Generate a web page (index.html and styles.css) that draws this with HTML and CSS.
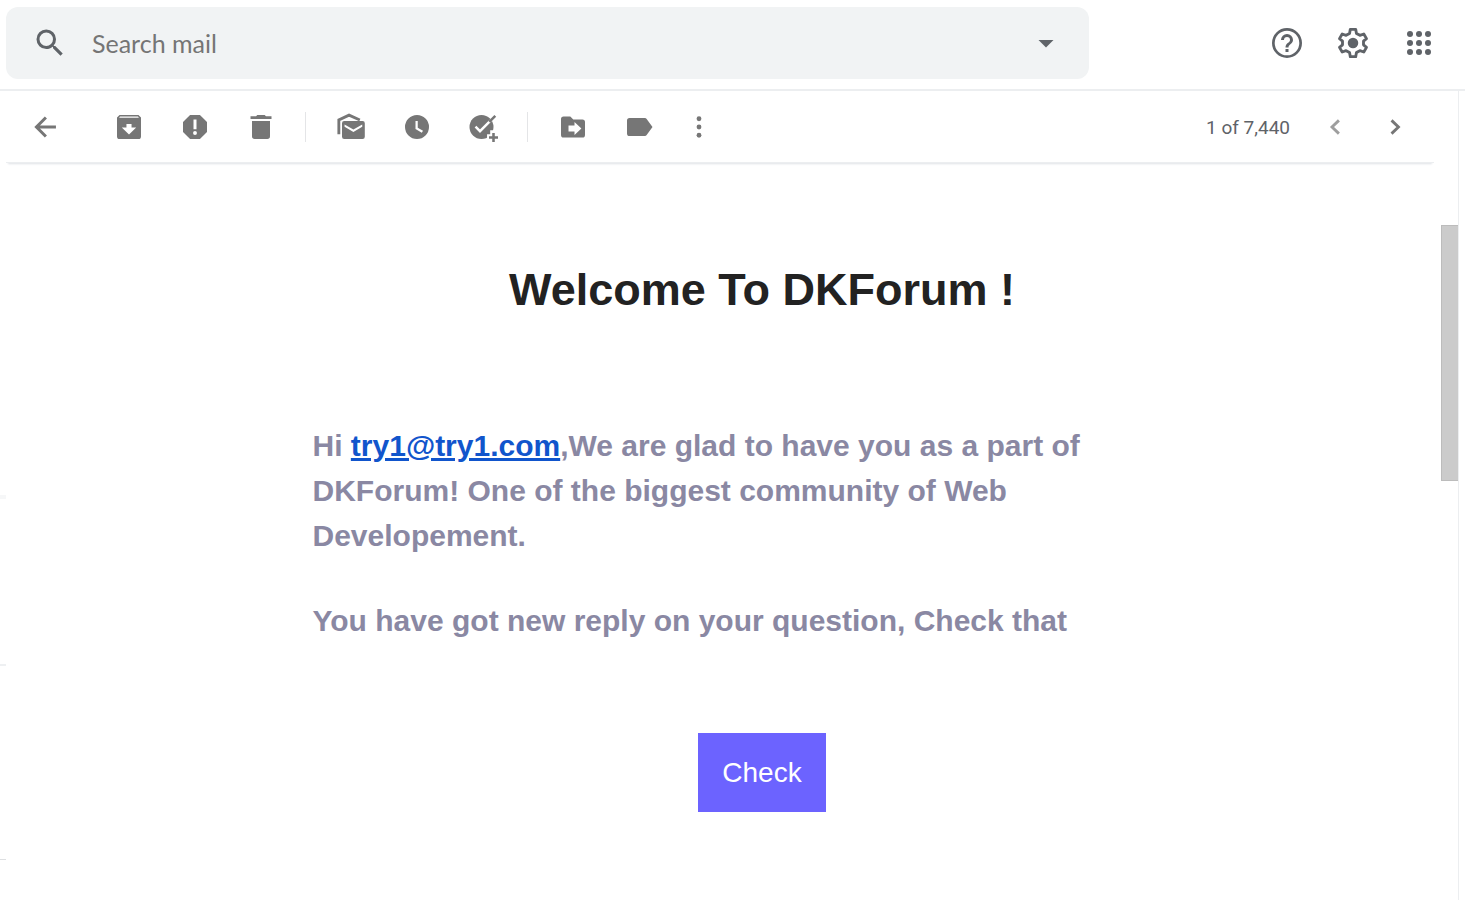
FILE: index.html
```html
<!DOCTYPE html>
<html lang="en">
<head>
<meta charset="utf-8">
<title>Mail</title>
<link rel="stylesheet" href="styles.css">
</head>
<body>
<header class="topbar">
  <form class="search" role="search">
    <button class="icon-btn large" type="button" aria-label="Search">
      <svg viewBox="0 0 24 24"><path d="M15.500 14h-.79l-.28-.27A6.470 6.470 0 0 0 16 9.500 6.500 6.500 0 1 0 9.500 16c1.610 0 3.090-.59 4.230-1.570l.27.28v.79l5 4.990L20.490 19zm-6 0a4.500 4.500 0 1 1 0-9 4.500 4.500 0 0 1 0 9z"/></svg>
    </button>
    <input class="search-input" type="text" placeholder="Search mail" aria-label="Search mail">
    <button class="icon-btn large" type="button" aria-label="Search options">
      <svg viewBox="0 0 24 24"><path d="M7 10l5 5 5-5z"/></svg>
    </button>
  </form>
  <nav class="top-actions" aria-label="Account tools">
    <button class="icon-btn large" type="button" aria-label="Help">
      <svg viewBox="0 0 24 24"><path d="M11 18h2v-2h-2zm1-16a10 10 0 1 0 0 20 10 10 0 0 0 0-20zm0 18.200a8.200 8.200 0 1 1 0-16.400 8.200 8.200 0 0 1 0 16.400zM12 6a4 4 0 0 0-4 4h2a2 2 0 1 1 4 0c0 2-3 1.750-3 5h2c0-2.250 3-2.500 3-5a4 4 0 0 0-4-4z"/></svg>
    </button>
    <button class="icon-btn large" type="button" aria-label="Settings">
      <svg viewBox="0 0 24 24"><path d="M10.200 2.900h3.600l.5 2.700 2.300 1.300 2.600-.9 1.800 3.100-2 1.700v2.400l2 1.700-1.800 3.100-2.600-.9-2.300 1.300-.5 2.700h-3.600l-.5-2.700-2.300-1.300-2.600.9L3 14.900l2-1.700v-2.400L3 9.100 4.800 6l2.600.9 2.300-1.300z" fill="none" stroke="currentColor" stroke-width="1.900" stroke-linejoin="round"/><circle cx="12" cy="12" r="3.500"/></svg>
    </button>
    <button class="icon-btn large" type="button" aria-label="Apps">
      <svg viewBox="0 0 24 24"><circle cx="6" cy="6" r="2"/><circle cx="12" cy="6" r="2"/><circle cx="18" cy="6" r="2"/><circle cx="6" cy="12" r="2"/><circle cx="12" cy="12" r="2"/><circle cx="18" cy="12" r="2"/><circle cx="6" cy="18" r="2"/><circle cx="12" cy="18" r="2"/><circle cx="18" cy="18" r="2"/></svg>
    </button>
  </nav>
</header>
<div class="workspace">
  <div class="nav-edge" aria-hidden="true">
    <span class="edge-shadow"></span>
    <span class="edge-line"></span>
    <span class="edge-line last"></span>
  </div>
  <main class="mail">
    <div class="toolbar" role="toolbar" aria-label="Message actions">
      <button class="icon-btn back" type="button" aria-label="Back">
        <svg viewBox="0 0 20 20"><path d="M17.300 10H4.700M10.600 3.700 4.300 10l6.300 6.300" fill="none" stroke="currentColor" stroke-width="2"/></svg>
      </button>
      <div class="group">
        <button class="icon-btn" type="button" aria-label="Archive">
          <svg viewBox="0 0 20 20"><path fill-rule="evenodd" d="M3.700 2h12.600L18 3.700v12.600a1.700 1.700 0 0 1-1.700 1.700H3.700A1.700 1.700 0 0 1 2 16.300V3.700zm.3 1-.6.8h13.200L16 3zM8.300 8v2.300H5.200L10 15l4.800-4.700h-3.100V8z"/></svg>
        </button>
        <button class="icon-btn" type="button" aria-label="Report spam">
          <svg viewBox="0 0 20 20"><path fill-rule="evenodd" d="M6.700 2h6.600L18 6.700v6.600L13.300 18H6.700L2 13.300V6.700zM9 5v6.500h2V5zm1 7.700a1.300 1.300 0 1 0 0 2.600 1.300 1.300 0 0 0 0-2.600z"/></svg>
        </button>
        <button class="icon-btn" type="button" aria-label="Delete">
          <svg viewBox="0 0 20 20"><path d="M7.500 2h5l.8.800H17v1.800H3V2.800h3.700zM4 6h12v10.200a1.800 1.800 0 0 1-1.800 1.800H5.800A1.800 1.800 0 0 1 4 16.200z"/></svg>
        </button>
      </div>
      <span class="divider"></span>
      <div class="group">
        <button class="icon-btn" type="button" aria-label="Mark as unread">
          <svg viewBox="0 0 20 20"><path d="M1.900 14.800V5.300l6.800-3.200 7.200 3.200" fill="none" stroke="currentColor" stroke-width="1.900"/><path fill-rule="evenodd" d="M5.500 6h12.200a1.500 1.500 0 0 1 1.500 1.500v9a1.500 1.500 0 0 1-1.500 1.500H5.500A1.500 1.500 0 0 1 4 16.500v-9A1.500 1.500 0 0 1 5.500 6zm.2 2.300v1.600l5.900 3.400 5.900-3.400V8.300l-5.900 3.400z"/></svg>
        </button>
        <button class="icon-btn" type="button" aria-label="Snooze">
          <svg viewBox="0 0 20 20"><path fill-rule="evenodd" d="M10 2a8 8 0 1 0 0 16 8 8 0 0 0 0-16zM9 6h1.500v4.500l3.500 2-.8 1.400L9 11.400z"/></svg>
        </button>
        <button class="icon-btn" type="button" aria-label="Add to tasks">
          <svg viewBox="0 0 20 20"><circle cx="9" cy="10" r="8"/><path class="cut" d="m5 9.800 3 3L16.500 4.300" stroke-width="1.600"/><path class="cut" d="M17 12.200v7.300M12.700 17h6" stroke-width="4.400"/><path d="m14.200 6.600 4-4M17 14v6M14 17h6" fill="none" stroke="currentColor" stroke-width="1.700"/></svg>
        </button>
      </div>
      <span class="divider"></span>
      <div class="group">
        <button class="icon-btn" type="button" aria-label="Move to">
          <svg viewBox="0 0 20 20"><path fill-rule="evenodd" d="M3.700 3h4.500l2 2h6.100A1.700 1.700 0 0 1 18 6.700v8.600a1.700 1.700 0 0 1-1.700 1.700H3.700A1.700 1.700 0 0 1 2 15.300V4.700A1.700 1.700 0 0 1 3.700 3zM11 6.700V9H7v4h4v2.300l4.600-4.300z"/></svg>
        </button>
        <button class="icon-btn" type="button" aria-label="Labels">
          <svg viewBox="0 0 20 20"><path d="M3.700 4h10c.6 0 1 .2 1.400.7L19 10l-3.900 5.300c-.4.500-.8.700-1.400.7h-10A1.700 1.700 0 0 1 2 14.300V5.700A1.700 1.700 0 0 1 3.700 4z"/></svg>
        </button>
      </div>
      <button class="icon-btn more" type="button" aria-label="More">
        <svg viewBox="0 0 20 20"><circle cx="10" cy="4.500" r="1.600"/><circle cx="10" cy="10" r="1.600"/><circle cx="10" cy="15.500" r="1.600"/></svg>
      </button>
      <div class="pager">
        <span class="count">1 of 7,440</span>
        <button class="icon-btn" type="button" aria-label="Newer" disabled>
          <svg viewBox="0 0 20 20"><path d="M12.600 5.600 8 10l4.600 4.400" fill="none" stroke="currentColor" stroke-width="1.900"/></svg>
        </button>
        <button class="icon-btn" type="button" aria-label="Older">
          <svg viewBox="0 0 20 20"><path d="M7.700 5.600 12.300 10l-4.600 4.400" fill="none" stroke="currentColor" stroke-width="1.900"/></svg>
        </button>
      </div>
    </div>
    <article class="message">
      <h1 class="title">Welcome To DKForum !</h1>
      <p class="text">Hi <a class="mail-link" href="mailto:try1@try1.com">try1@try1.com</a>,We are glad to have you as a part of DKForum! One of the biggest community of Web Developement.</p>
      <p class="text">You have got new reply on your question, Check that</p>
      <button class="check" type="button">Check</button>
    </article>
  </main>
  <div class="scroll-rail" aria-hidden="true"><div class="thumb"></div></div>
</div>
</body>
</html>
```
FILE: styles.css
```css
* {
  box-sizing: border-box;
}

body {
  margin: 0;
  min-height: 100vh;
  display: flex;
  flex-direction: column;
  background: #fff;
  font-family: "Liberation Sans", Arial, sans-serif;
}

button {
  border: 0;
  padding: 0;
  background: none;
  font: inherit;
  cursor: pointer;
}

.topbar {
  display: flex;
  align-items: center;
  justify-content: space-between;
  padding: 7px 28px 10px 6px;
  border-bottom: 2px solid #eceef0;
  color: #5f6368;
}

.search {
  flex: 0 1 1083px;
  display: flex;
  align-items: center;
  height: 72px;
  padding: 0 25px 0 26px;
  border-radius: 12px;
  background: #f1f3f4;
}

.search-input {
  flex: 1;
  min-width: 0;
  margin-left: 24px;
  padding: 0;
  border: 0;
  outline: 0;
  background: none;
  font-family: Lato, sans-serif;
  font-size: 25px;
  color: #757575;
}

.search-input::placeholder {
  color: #757575;
  opacity: 1;
}

.top-actions {
  display: flex;
  gap: 30px;
}

.icon-btn {
  flex: none;
  width: 30px;
  height: 30px;
  color: inherit;
}

.icon-btn.large {
  width: 36px;
  height: 36px;
}

.icon-btn:disabled {
  opacity: 0.7;
}

.icon-btn svg {
  display: block;
  width: 100%;
  height: 100%;
  fill: currentColor;
  overflow: visible;
}

.cut {
  fill: none;
  stroke: #fff;
}

.workspace {
  flex: 1;
  display: flex;
  margin-right: 6px;
  border-right: 1px solid #eceef0;
}

.nav-edge {
  width: 6px;
  display: flex;
  flex-direction: column;
}

.edge-shadow {
  height: 4px;
  margin-top: 404px;
  background: #f6f7f8;
}

.edge-line {
  height: 2px;
  margin-top: 165px;
  background: #eef0f2;
}

.edge-line.last {
  height: 1px;
  margin-top: 193px;
  background: #dddfe1;
}

.mail {
  flex: 1;
  min-width: 0;
}

.toolbar {
  display: flex;
  align-items: center;
  height: 72px;
  margin-right: 7px;
  padding: 0 24px;
  box-shadow: inset 0 -1px 0 #eceef0, 0 3px 2px -2px #dfe2e6;
  color: #767676;
}

.back {
  margin-right: 54px;
}

.group {
  display: flex;
  gap: 36px;
}

.divider {
  width: 1px;
  height: 30px;
  margin: 0 30px 0 29px;
  background: #e4e5e7;
}

.more {
  margin-left: 30px;
}

.pager {
  display: flex;
  align-items: center;
  gap: 30px;
  margin-left: auto;
}

.count {
  font-family: Roboto, sans-serif;
  font-size: 19px;
  color: #5f6368;
}

.message {
  max-width: 1008px;
  margin: 0 31px 0 auto;
  padding: 101px 0 48px 108px;
}

@media (min-width: 1200px) {
  .message {
    max-width: none;
    padding-left: calc(50% - 411px);
    padding-right: calc(50% - 519px);
  }
}

.title {
  margin: 0 0 107px;
  font-size: 45px;
  line-height: 52px;
  text-align: center;
  color: #222;
}

.text {
  margin: 0 0 40px;
  font-size: 30px;
  font-weight: bold;
  line-height: 45px;
  color: #8a88a3;
}

.mail-link {
  color: #15c;
}

.check {
  display: block;
  min-width: 128px;
  margin: 90px auto 0;
  padding: 24px;
  background: #6c63ff;
  color: #fff;
  font-size: 28px;
  line-height: 31px;
}

.scroll-rail {
  width: 17px;
  padding-top: 134px;
}

.thumb {
  height: 256px;
  border: 1px solid #bcbcbc;
  border-right: 0;
  background: #cbcbcb;
}
```
